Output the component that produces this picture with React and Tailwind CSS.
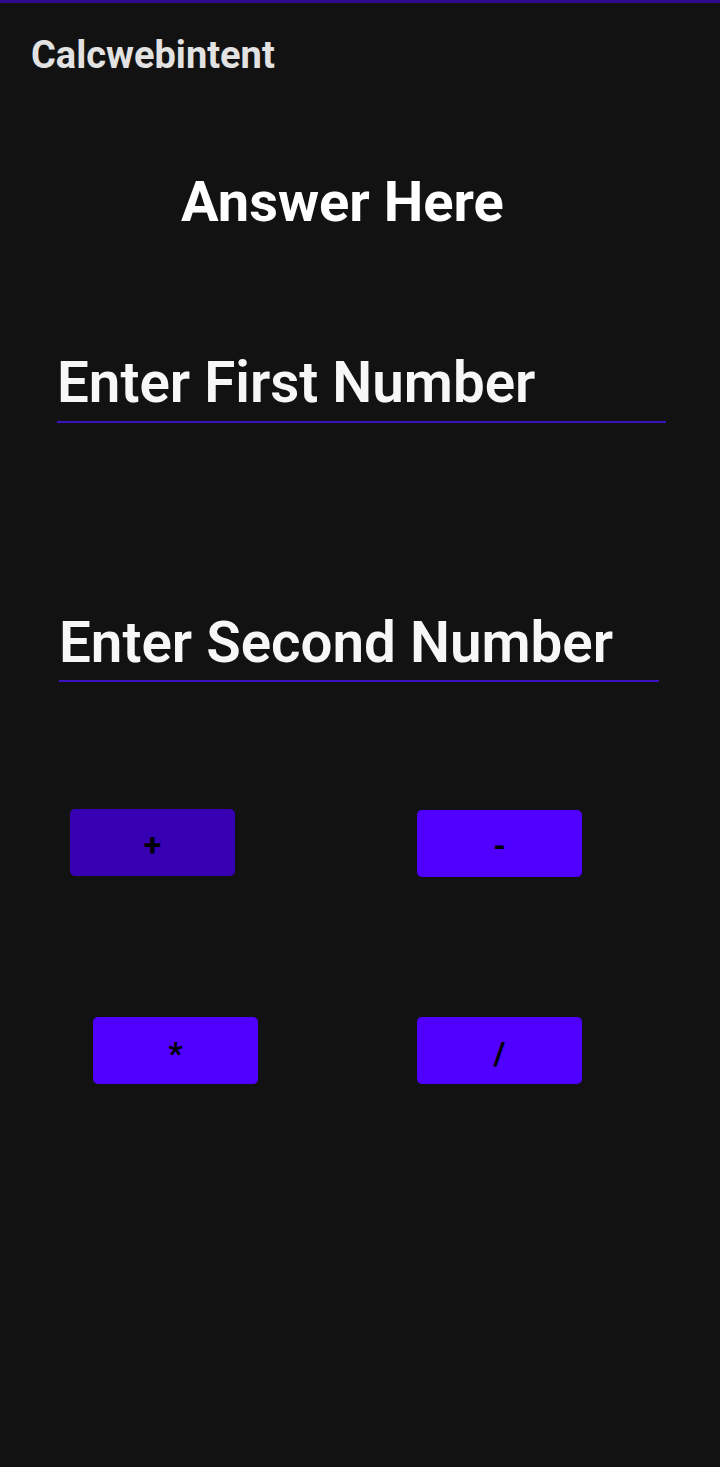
export default function App() {
  return (
    <div className="w-[720px] h-[1467px] bg-[#121212] font-['Roboto',sans-serif] overflow-hidden">
      {/* top strip */}
      <div className="h-[3px] bg-[#2c0c8c]" />

      {/* app bar title */}
      <div className="mt-[33px] pl-[31px] text-[38px] leading-none font-bold text-[#e2e2e2]">
        Calcwebintent
      </div>

      {/* result */}
      <div className="mt-[100px] pl-[181px] text-[56px] leading-none font-bold text-white">
        Answer Here
      </div>

      {/* inputs */}
      <div className="mt-[125px] ml-[57px] w-[609px] pb-[9px] border-b-2 border-[#3d12c0] text-[56.5px] leading-none font-semibold text-[#f7f7f7]">
        Enter First Number
      </div>

      <div className="mt-[192px] ml-[59px] w-[600px] pb-[9px] border-b-2 border-[#3d12c0] text-[56.5px] leading-none font-semibold text-[#f7f7f7]">
        Enter Second Number
      </div>

      {/* operator buttons */}
      <div className="mt-[127px] flex items-start">
        <button className="ml-[70px] w-[165px] h-[67px] pt-[4px] rounded-[5px] bg-[#3700b3] text-black text-[32px] font-bold leading-none">
          +
        </button>
        <button className="ml-[182px] mt-[1px] w-[165px] h-[67px] pt-[4px] rounded-[5px] bg-[#5000ff] text-black text-[32px] font-bold leading-none">
          -
        </button>
      </div>

      <div className="mt-[140px] flex items-start">
        <button className="ml-[93px] w-[165px] h-[67px] pt-[4px] rounded-[5px] bg-[#5000ff] text-black text-[32px] font-bold leading-none">
          *
        </button>
        <button className="ml-[159px] w-[165px] h-[67px] pt-[4px] rounded-[5px] bg-[#5000ff] text-black text-[32px] font-bold leading-none">
          /
        </button>
      </div>
    </div>
  );
}
